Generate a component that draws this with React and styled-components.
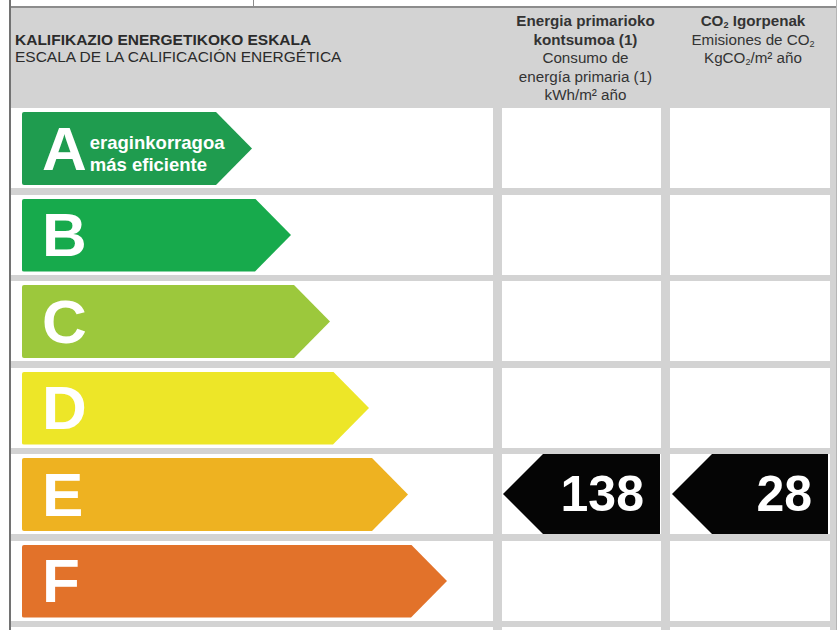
import React from "react";
import styled, { createGlobalStyle } from "styled-components";

const GlobalStyle = createGlobalStyle`
  html, body {
    margin: 0;
    padding: 0;
    background: #fff;
    overflow: hidden;
  }
  body {
    font-family: "Liberation Sans", Arial, sans-serif;
  }
`;

const Page = styled.div`
  width: 840px;
  height: 630px;
  overflow: hidden;
  background: #fff;
`;

const Frame = styled.div`
  margin-left: 9px;
  width: 825px;
  height: 630px;
  border-left: 2px solid #727272;
  border-right: 1px solid #b5b5b5;
  background: #d3d3d3;
`;

const TopRow = styled.div`
  display: grid;
  grid-template-columns: 242px 1fr;
  height: 6px;
  background: #fff;
  border-bottom: 2px solid #8c8c8c;
`;

const TopCell = styled.div`
  border-left: ${(p) => (p.$divider ? "1px solid #8c8c8c" : "none")};
`;

const Grid = styled.div`
  display: grid;
  grid-template-columns: 482px 159px 160px;
  column-gap: 9px;
`;

const HeaderRow = styled(Grid)`
  height: 100px;
`;

const ScaleRow = styled(Grid)`
  height: 80px;
  margin-bottom: 6.5px;
`;

const ScaleTitle = styled.div`
  padding: 23px 0 0 4px;
  font-size: 15.5px;
  line-height: 17px;
  color: #2b2b2b;
  white-space: nowrap;
`;

const Bold = styled.div`
  font-weight: bold;
`;

const ColTitle = styled.div`
  padding-top: 4px;
  padding-left: ${(p) => p.$shift || 0}px;
  text-align: center;
  font-size: 15.2px;
  line-height: 18.6px;
  color: #333;
  white-space: nowrap;
`;

const Sub = styled.span`
  font-size: 0.6em;
  line-height: 0;
  vertical-align: -0.25em;
`;

const Cell = styled.div`
  background: #fff;
  display: flex;
  align-items: flex-start;
`;

const BarCell = styled(Cell)`
  padding: 4px 0 0 11px;
`;

const Bar = styled.div`
  width: ${(p) => p.$width}px;
  height: 73px;
  background: ${(p) => p.$color};
  clip-path: polygon(
    0 0,
    calc(100% - 36px) 0,
    100% 50%,
    calc(100% - 36px) 100%,
    0 100%
  );
  border-radius: 2px;
  display: flex;
  align-items: center;
  padding-left: 20px;
  box-sizing: border-box;
  color: #fff;
`;

const Letter = styled.span`
  font-size: 62px;
  font-weight: bold;
  line-height: 1;
`;

const BarNote = styled.div`
  margin-left: 3px;
  font-size: 18.5px;
  font-weight: bold;
  line-height: 22px;
  padding-top: 10px;
`;

const Badge = styled.div`
  flex: 1;
  align-self: stretch;
  margin: 0 ${(p) => p.$inset}px;
  background: #050505;
  clip-path: polygon(40px 0, 100% 0, 100% 100%, 40px 100%, 0 50%);
  display: flex;
  align-items: center;
  justify-content: flex-end;
  padding-right: 16px;
  color: #fff;
  font-size: 50px;
  font-weight: bold;
`;

// the G row starts at the bottom edge, only its white cells show
const scale = [
  { letter: "A", color: "#1f9c4f", note: ["eraginkorragoa", "más eficiente"] },
  { letter: "B", color: "#17aa4c" },
  { letter: "C", color: "#9cc83c" },
  { letter: "D", color: "#ede628" },
  { letter: "E", color: "#eeb221", energy: 138, co2: 28 },
  { letter: "F", color: "#e2722a" },
  { letter: "G" },
];

export default function App() {
  return (
    <Page>
      <GlobalStyle />
      <Frame>
        <TopRow>
          <TopCell />
          <TopCell $divider />
        </TopRow>

        <HeaderRow>
          <ScaleTitle>
            <Bold>KALIFIKAZIO ENERGETIKOKO ESKALA</Bold>
            <div>ESCALA DE LA CALIFICACIÓN ENERGÉTICA</div>
          </ScaleTitle>
          <ColTitle $shift={8}>
            <Bold>Energia primarioko</Bold>
            <Bold>kontsumoa (1)</Bold>
            <div>Consumo de</div>
            <div>energía primaria (1)</div>
            <div>kWh/m² año</div>
          </ColTitle>
          <ColTitle $shift={6}>
            <Bold>
              CO<Sub>2</Sub> Igorpenak
            </Bold>
            <div>
              Emisiones de CO<Sub>2</Sub>
            </div>
            <div>
              KgCO<Sub>2</Sub>/m² año
            </div>
          </ColTitle>
        </HeaderRow>

        {scale.map((row, i) => (
          <ScaleRow key={row.letter}>
            <BarCell>
              {row.color && (
                <Bar $width={230 + i * 39} $color={row.color}>
                  <Letter>{row.letter}</Letter>
                  {row.note && (
                    <BarNote>
                      <div>{row.note[0]}</div>
                      <div>{row.note[1]}</div>
                    </BarNote>
                  )}
                </Bar>
              )}
            </BarCell>
            <Cell>{row.energy && <Badge $inset={1}>{row.energy}</Badge>}</Cell>
            <Cell>{row.co2 && <Badge $inset={2}>{row.co2}</Badge>}</Cell>
          </ScaleRow>
        ))}
      </Frame>
    </Page>
  );
}
